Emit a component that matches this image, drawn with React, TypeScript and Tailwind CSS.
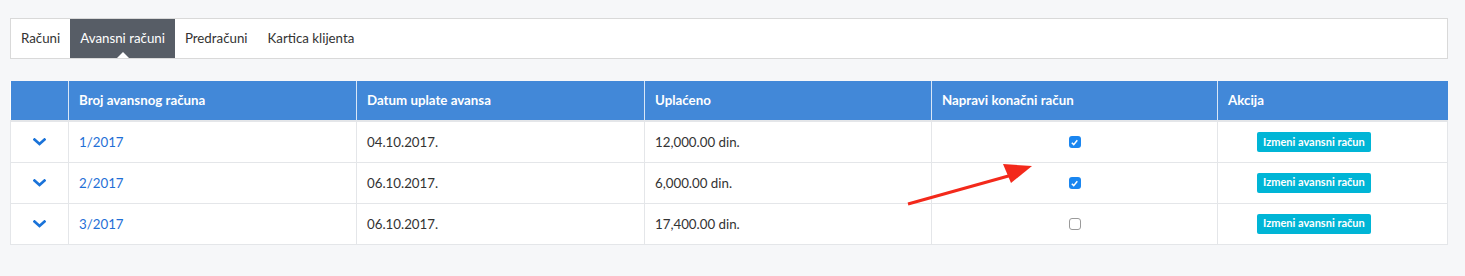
import React from 'react';

const rows = [
  { id: '1/2017', date: '04.10.2017.', paid: '12,000.00 din.', checked: true },
  { id: '2/2017', date: '06.10.2017.', paid: '6,000.00 din.', checked: true },
  { id: '3/2017', date: '06.10.2017.', paid: '17,400.00 din.', checked: false },
];

const tabs = ['Računi', 'Avansni računi', 'Predračuni', 'Kartica klijenta'];

const Chevron = () => (
  <svg width="13" height="8" viewBox="0 0 13 8" className="inline-block">
    <path d="M1.5 1.5 L6.5 6 L11.5 1.5" fill="none" stroke="#1a73d9" strokeWidth="2.6" strokeLinecap="square" />
  </svg>
);

const Checkbox = ({ checked }: { checked: boolean }) =>
  checked ? (
    <span className="inline-flex h-[12px] w-[12px] items-center justify-center rounded-[3px] bg-[#1a86f0]">
      <svg width="9" height="9" viewBox="0 0 9 9">
        <path d="M1.8 4.8 L3.7 6.6 L7.3 2.2" fill="none" stroke="white" strokeWidth="1.5" />
      </svg>
    </span>
  ) : (
    <span className="inline-block h-[12px] w-[12px] rounded-[3px] border border-[#9a9a9a] bg-white" />
  );

export default function App() {
  return (
    <div className="relative min-h-[276px] bg-[#f6f7f9] pl-[10px] pr-[17px] pt-[18px] font-['Lato',sans-serif] text-[13.3px] text-[#333]">
      {/* tabs */}
      <div className="flex h-[41px] border border-[#d9d9d9] bg-white">
        {tabs.map((t, i) =>
          i === 1 ? (
            <div key={t} className="relative flex items-center bg-[#575d66] px-[10px] text-white">
              {t}
              <span className="absolute bottom-0 left-1/2 h-0 w-0 -translate-x-1/2 border-x-[6px] border-b-[6px] border-x-transparent border-b-white" />
            </div>
          ) : (
            <div key={t} className="flex items-center px-[10px] text-[#333]">
              {t}
            </div>
          )
        )}
      </div>

      {/* table */}
      <table className="mt-[22px] w-full table-fixed border-collapse bg-white">
        <colgroup>
          <col className="w-[58px]" />
          <col className="w-[288px]" />
          <col className="w-[288px]" />
          <col className="w-[287px]" />
          <col className="w-[286px]" />
          <col />
        </colgroup>
        <thead>
          <tr className="h-[40px] bg-[#4288d8] text-left font-bold text-white">
            <th className="border-r border-white/80"></th>
            <th className="border-r border-white/80 px-[10px] pt-[1px]">Broj avansnog računa</th>
            <th className="border-r border-white/80 px-[10px] pt-[1px]">Datum uplate avansa</th>
            <th className="border-r border-white/80 px-[10px] pt-[1px]">Uplaćeno</th>
            <th className="border-r border-white/80 px-[10px] pt-[1px]">Napravi konačni račun</th>
            <th className="px-[10px] pt-[1px]">Akcija</th>
          </tr>
        </thead>
        <tbody>
          {rows.map((r, idx) => (
            <tr
              key={r.id}
              className={`h-[41px] ${idx === 0 ? 'border-t-2' : 'border-t'} border-[#e4e6e9]`}
            >
              <td className="border-x border-[#e4e6e9] text-center">
                <Chevron />
              </td>
              <td className="border-r border-[#e4e6e9] px-[10px] pt-[2px] text-[#1f6fd6]">{r.id}</td>
              <td className="border-r border-[#e4e6e9] px-[10px] pt-[2px]">{r.date}</td>
              <td className="border-r border-[#e4e6e9] px-[10px] pt-[2px]">{r.paid}</td>
              <td className="border-r border-[#e4e6e9] text-center">
                <span className="inline-flex align-middle">
                  <Checkbox checked={r.checked} />
                </span>
              </td>
              <td className="border-r border-[#e4e6e9] pl-[39px] text-left">
                <button className="h-[20px] rounded-[2px] bg-[#00b5d6] px-[6px] text-[11px] font-bold text-white">
                  Izmeni avansni račun
                </button>
              </td>
            </tr>
          ))}
          <tr className="h-0 border-t border-[#e4e6e9]" />
        </tbody>
      </table>

      {/* annotation arrow */}
      <svg className="pointer-events-none absolute left-0 top-0" width="1465" height="276">
        <line x1="908" y1="204" x2="1012" y2="175" stroke="#f3291b" strokeWidth="3" />
        <polygon points="1003,164 1032,166 1011,183" fill="#f3291b" />
      </svg>
    </div>
  );
}
